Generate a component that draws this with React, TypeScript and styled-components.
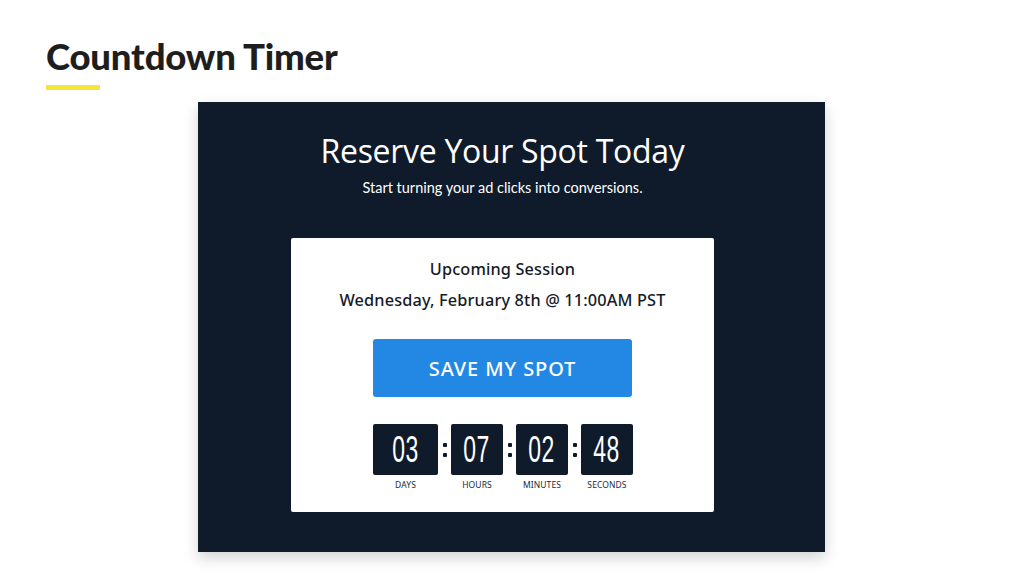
import React from "react";
import styled, { createGlobalStyle } from "styled-components";

const Global = createGlobalStyle`
  html, body { margin: 0; padding: 0; background: #ffffff; }
  body { width: 1024px; height: 576px; overflow: hidden; font-family: "Lato", "Liberation Sans", sans-serif; }
`;

const Page = styled.div`
  width: 1024px;
  height: 576px;
  display: flex;
  flex-direction: column;
  background: #ffffff;
`;

const Header = styled.header`
  padding: 36px 0 0 46px;
  height: 102px;
  flex-shrink: 0;
  box-sizing: border-box;
  display: flex;
  flex-direction: column;
  align-items: flex-start;
`;

const PageTitle = styled.h1`
  margin: 0;
  font-family: "Lato", sans-serif;
  font-weight: 900;
  font-size: 36.5px;
  line-height: 40px;
  letter-spacing: -0.2px;
  color: #1e1e1e;
`;

const Underline = styled.div`
  width: 54px;
  height: 5px;
  margin-top: 9px;
  background: #f6e63c;
`;

const Panel = styled.section`
  align-self: center;
  margin-left: -1px;
  width: 627px;
  height: 450px;
  flex-shrink: 0;
  box-sizing: border-box;
  background: #0f1b2b;
  box-shadow: 0 6px 14px rgba(0, 0, 0, 0.18);
  display: flex;
  flex-direction: column;
  align-items: center;
  padding: 30px 18px 0 0;
`;

const Heading = styled.h2`
  margin: 0;
  font-family: "Open Sans", sans-serif;
  font-weight: 400;
  font-size: 32px;
  line-height: 38px;
  color: #ffffff;
  letter-spacing: -0.3px;
`;

const Sub = styled.p`
  margin: 9px 0 0;
  font-family: "Lato", sans-serif;
  font-size: 14.5px;
  line-height: 18px;
  color: #ffffff;
`;

const Card = styled.div`
  margin-top: 41px;
  width: 423px;
  height: 274px;
  box-sizing: border-box;
  background: #ffffff;
  border-radius: 2px;
  display: flex;
  flex-direction: column;
  align-items: center;
  padding-top: 21px;
`;

const CardLine = styled.p<{ $gap?: number }>`
  margin: ${(p) => p.$gap ?? 0}px 0 0;
  font-family: "Noto Sans", "Lato", sans-serif;
  font-weight: 500;
  font-size: 16.3px;
  line-height: 20px;
  letter-spacing: 0.15px;
  color: #151b26;
`;

const Button = styled.button`
  margin-top: 29px;
  width: 259px;
  height: 58px;
  border: none;
  border-radius: 3px;
  background: #2288e4;
  color: #ffffff;
  font-family: "Noto Sans", "Lato", sans-serif;
  font-weight: 500;
  font-size: 20px;
  letter-spacing: 0.9px;
  cursor: pointer;
`;

const Timer = styled.div`
  margin-top: 27px;
  display: flex;
  align-items: flex-start;
  margin-left: 1px;
`;

const Unit = styled.div`
  display: flex;
  flex-direction: column;
  align-items: center;
`;

const Box = styled.div<{ $w: number }>`
  width: ${(p) => p.$w}px;
  height: 51px;
  border-radius: 2px;
  background: #0f1b2b;
  display: flex;
  align-items: center;
  justify-content: center;
  overflow: hidden;
`;

const Digits = styled.span`
  display: inline-block;
  font-family: "Liberation Sans", sans-serif;
  font-size: 37px;
  line-height: 37px;
  color: #ffffff;
  transform: scaleX(0.62);
  letter-spacing: 1px;
`;

const Label = styled.span`
  margin-top: 4px;
  font-family: "Noto Sans", "Lato", sans-serif;
  font-size: 8.5px;
  line-height: 11px;
  color: #222a36;
  letter-spacing: 0.1px;
`;

const Colon = styled.div`
  width: 13px;
  height: 51px;
  display: flex;
  flex-direction: column;
  align-items: center;
  justify-content: center;
  gap: 6px;
  &::before, &::after {
    content: "";
    width: 4px;
    height: 4px;
    background: #0f1b2b;
    border-radius: 1px;
  }
`;

const units = [
  { v: "03", l: "DAYS", w: 65 },
  { v: "07", l: "HOURS", w: 52 },
  { v: "02", l: "MINUTES", w: 52 },
  { v: "48", l: "SECONDS", w: 52 },
];

export default function App() {
  return (
    <Page>
      <Global />
      <Header>
        <PageTitle>Countdown Timer</PageTitle>
        <Underline />
      </Header>
      <Panel>
        <Heading>Reserve Your Spot Today</Heading>
        <Sub>Start turning your ad clicks into conversions.</Sub>
        <Card>
          <CardLine>Upcoming Session</CardLine>
          <CardLine $gap={11}>Wednesday, February 8th @ 11:00AM PST</CardLine>
          <Button>SAVE MY SPOT</Button>
          <Timer>
            {units.map((u, i) => (
              <React.Fragment key={u.l}>
                {i > 0 && <Colon />}
                <Unit>
                  <Box $w={u.w}>
                    <Digits>{u.v}</Digits>
                  </Box>
                  <Label>{u.l}</Label>
                </Unit>
              </React.Fragment>
            ))}
          </Timer>
        </Card>
      </Panel>
    </Page>
  );
}
